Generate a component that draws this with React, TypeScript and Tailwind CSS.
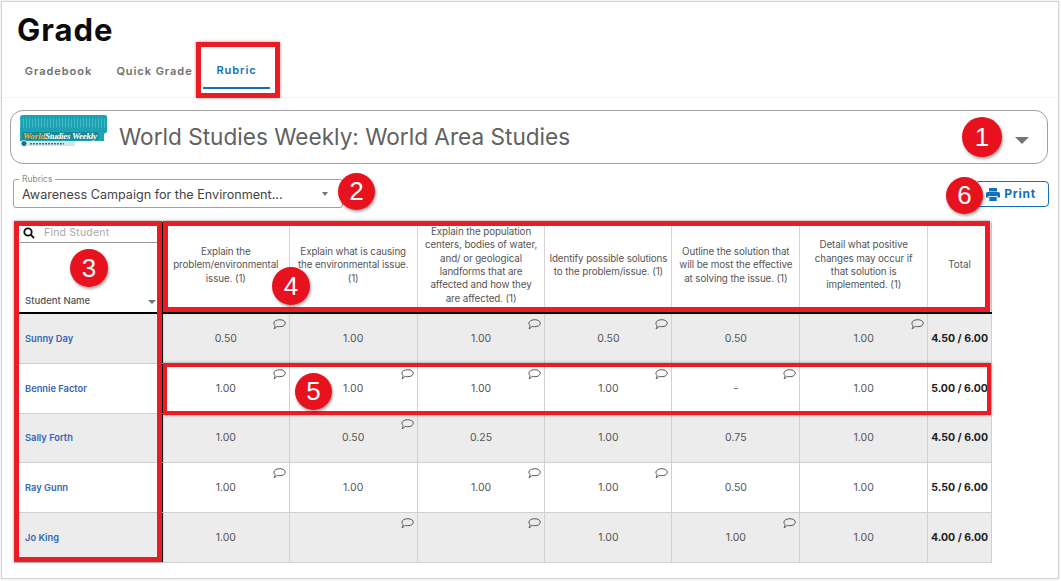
import React from "react";

const cols = ["w-[127px]", "w-[128px]", "w-[128px]", "w-[127px]", "w-[128px]", "w-[128px]"];
const headers = [
  ["Explain the", "problem/environmental", "issue. (1)"],
  ["Explain what is causing", "the environmental issue.", "(1)"],
  ["Explain the population", "centers, bodies of water,", "and/ or geological", "landforms that are", "affected and how they", "are affected. (1)"],
  ["Identify possible solutions", "to the problem/issue. (1)"],
  ["Outline the solution that", "will be most the effective", "at solving the issue. (1)"],
  ["Detail what positive", "changes may occur if", "that solution is", "implemented. (1)"],
];
type Row = { name: string; h: string; vals: string[]; c: number[]; total: string; shade: boolean };
const rows: Row[] = [
  { name: "Sunny Day", h: "h-[50px]", vals: ["0.50", "1.00", "1.00", "0.50", "0.50", "1.00"], c: [0, 2, 3, 5], total: "4.50 / 6.00", shade: true },
  { name: "Bennie Factor", h: "h-[50px]", vals: ["1.00", "1.00", "1.00", "1.00", "-", "1.00"], c: [0, 1, 2, 3, 4], total: "5.00 / 6.00", shade: false },
  { name: "Sally Forth", h: "h-[49px]", vals: ["1.00", "0.50", "0.25", "1.00", "0.75", "1.00"], c: [1], total: "4.50 / 6.00", shade: true },
  { name: "Ray Gunn", h: "h-[50px]", vals: ["1.00", "1.00", "1.00", "1.00", "0.50", "1.00"], c: [0, 2, 3], total: "5.50 / 6.00", shade: false },
  { name: "Jo King", h: "h-[50px]", vals: ["1.00", "", "", "1.00", "1.00", "1.00"], c: [1, 2, 4], total: "4.00 / 6.00", shade: true },
];

function Bubble() {
  return (
    <svg className="absolute right-[3px] top-[5px]" width="13" height="11" viewBox="0 0 13 11" fill="none" stroke="#555" strokeWidth="1">
      <path d="M6.8 0.7C9.9 0.7 12.3 2.2 12.3 4.2C12.3 6.2 9.9 7.7 6.8 7.7C5.8 7.7 4.9 7.6 4.1 7.3C3.4 8.4 2.2 9.6 1 9.6C1.7 8.8 2.1 7.6 2 6.5C1.3 5.9 0.9 5.1 0.9 4.2C0.9 2.2 3.6 0.7 6.8 0.7Z" />
    </svg>
  );
}

function Badge({ n, className }: { n: number; className: string }) {
  return (
    <div className={"absolute z-20 flex items-center justify-center rounded-full bg-[#e8121f] text-[26px] text-white shadow-[1px_2px_3px_rgba(0,0,0,0.35)] " + className} style={{ fontFamily: "'Liberation Sans', sans-serif" }}>
      {n}
    </div>
  );
}

function Caret({ className }: { className: string }) {
  return <div className={"h-0 w-0 border-x-transparent border-t-[#757575] " + className} />;
}

function Logo() {
  return (
    <svg width="88" height="33" viewBox="0 0 88 33" className="shrink-0">
      <path d="M3 0H85Q87 0 87 3V17L84 19V26H0V3Q0 0 3 0Z" fill="#1ba3b3" />
      <path d="M0 8H87" stroke="#6fc8d2" strokeWidth="9" strokeDasharray="1 2" opacity="0.55" />
      <rect x="2" y="17" width="76" height="8" fill="#16616c" opacity="0.4" />
      <text x="3" y="24" fontSize="9" fontWeight="700" fill="#f5b21f" fontFamily="'Liberation Serif', serif" fontStyle="italic">World</text>
      <text x="25" y="24" fontSize="9" fontWeight="700" fill="#ffffff" fontFamily="'Liberation Serif', serif" fontStyle="italic" textLength="52">Studies Weekly</text>
      <rect x="1" y="26" width="54" height="5" fill="#c8e8ec" />
      <circle cx="4" cy="28.5" r="3" fill="#1c6f93" stroke="#fff" strokeWidth="0.8" />
      <path d="M10 28.7H44" stroke="#334" strokeWidth="1.4" strokeDasharray="2 1" opacity="0.7" />
    </svg>
  );
}

export default function App() {
  return (
    <div className="h-[581px] w-[1061px] overflow-hidden bg-white p-px" style={{ fontFamily: "Inter, 'Noto Sans', sans-serif" }}>
      <div className="relative h-[578px] w-[1058px] border border-[#d4d4d4] shadow-[0_0_2px_rgba(0,0,0,0.15)]">
        <div className="pl-[15px] pt-[10px] text-[31px] font-bold leading-[36px] tracking-[1px] text-[#0c0c0c]">Grade</div>

        <div className="flex h-[50px] items-start border-b border-[#f4f4f4] pl-[11px] text-[11px] font-semibold tracking-[0.95px] text-[#6f6f6f]">
          <div className="flex h-[41px] w-[91px] items-center justify-center pt-[6px]">Gradebook</div>
          <div className="ml-[1px] flex h-[41px] w-[99px] items-center justify-center pt-[6px]">Quick Grade</div>
          <div className="-ml-[1px] flex h-[41px] w-[67px] items-center justify-center border-b-2 border-[#1270bd] pt-[6px] text-[#1270bd]">Rubric</div>
        </div>

        <div className="mx-[8px] mt-[12px] flex h-[54px] w-[1038px] items-start rounded-[13px] border border-[#a0a0a0] pl-[9px] pt-[4px]">
          <Logo />
          <div className="ml-[11px] mt-[5px] text-[22.6px] leading-[34px] text-[#616161]">World Studies Weekly: World Area Studies</div>
          <Caret className="ml-auto mr-[18px] mt-[22px] border-x-[7px] border-t-[7px]" />
        </div>

        <div className="mt-[15px] flex items-start pl-[11px] pr-[9px]">
          <div className="relative flex h-[29px] w-[330px] items-center rounded-[3px] border border-[#a0a0a0] pl-[8px] pt-[3px] text-[12.6px] text-[#444]">
            <span className="absolute -top-[6px] left-[5px] bg-white px-[3px] text-[8.5px] leading-[10px] text-[#8a8a8a]">Rubrics</span>
            Awareness Campaign for the Environment...
            <Caret className="absolute right-[14px] top-[12px] border-x-[3.5px] border-t-[4px]" />
          </div>
          <div className="ml-auto mt-[2px] flex h-[26px] w-[74px] items-center justify-end gap-[4px] rounded-[4px] border border-[#1270bd] pr-[12px] text-[12px] font-bold tracking-[0.8px] text-[#1270bd]">
            <svg width="14" height="13" viewBox="0 0 14 13" fill="#1270bd">
              <path d="M3 0H11V3.5H3Z" />
              <path d="M1.5 4H12.5Q14 4 14 5.5V9.5H11.5V8H2.5V9.5H0V5.5Q0 4 1.5 4Z" />
              <path d="M3.3 8.8H10.7V13H3.3Z" />
            </svg>
            Print
          </div>
        </div>

        <div className="ml-[12px] mt-[14px] w-[978px] text-[#555]">
          <div className="flex h-[92px] border-b-2 border-black">
            <div className="flex w-[149px] flex-col border-r-2 border-black pl-[6px] pr-[4px]">
              <div className="flex h-[21px] items-center gap-[9px] border-b border-[#999] pl-[3px] pt-[1px]">
                <svg width="12" height="12" viewBox="0 0 12 12" fill="none" stroke="#111" strokeWidth="1.8"><circle cx="5" cy="5" r="3.7" /><path d="M7.7 7.7L11 11" /></svg>
                <span className="text-[10.5px] font-normal tracking-[0.2px] text-[#a8a8a8]">Find Student</span>
              </div>
              <div className="mt-auto flex items-center justify-between pb-[4px] pl-[5px] pr-[1px] text-[9.6px] font-medium text-[#555]">
                Student Name
                <Caret className="mt-[3px] border-x-[4px] border-t-[4px]" />
              </div>
            </div>
            {headers.map((lines, i) => (
              <div key={i} className={"flex flex-col items-center justify-center border-r border-[#d4d4d4] pb-[4px] text-center text-[9.8px] font-normal leading-[13.4px] tracking-[-0.1px] text-[#555] " + cols[i]}>
                {lines.map((l) => (
                  <div key={l} className="whitespace-nowrap">{l}</div>
                ))}
              </div>
            ))}
            <div className="flex w-[64px] items-center justify-center border-r border-[#d4d4d4] pb-[4px] text-[9.8px] text-[#555]">Total</div>
          </div>

          {rows.map((r) => (
            <div key={r.name} className={"flex border-b border-[#d0d0d0] " + r.h + " " + (r.shade ? "bg-[#ececec]" : "bg-white")}>
              <div className="flex w-[149px] items-center border-r-2 border-black pl-[11px] text-[9.3px] font-semibold text-[#3565b5]">{r.name}</div>
              {r.vals.map((v, i) => (
                <div key={i} className={"relative flex items-center justify-center border-r border-[#d0d0d0] text-[10.5px] text-[#555] " + cols[i]}>
                  {v}
                  {r.c.includes(i) && <Bubble />}
                </div>
              ))}
              <div className="flex w-[64px] items-center justify-center border-r border-[#d0d0d0] text-[10.5px] font-bold text-[#222]">{r.total}</div>
            </div>
          ))}
        </div>

        {/* annotation overlays */}
        <div className="absolute left-[194px] top-[40px] z-10 h-[56px] w-[84px] border-[5px] border-[#ed1c24] shadow-[0_0_3px_rgba(0,0,0,0.4)]" />
        <div className="absolute left-[12px] top-[219px] z-10 h-[341px] w-[148px] border-[5px] border-[#ed1c24] shadow-[0_0_3px_rgba(0,0,0,0.4)]" />
        <div className="absolute left-[161px] top-[219px] z-10 h-[91px] w-[827px] border-[5px] border-[#ed1c24] shadow-[0_0_3px_rgba(0,0,0,0.4)]" />
        <div className="absolute left-[161px] top-[361px] z-10 h-[52px] w-[828px] border-[4px] border-[#ed1c24] shadow-[0_0_3px_rgba(0,0,0,0.4)]" />

        <Badge n={1} className="left-[960px] top-[115px] h-[40px] w-[40px] bg-[#e60a0a]" />
        <Badge n={2} className="left-[336px] top-[171px] h-[37px] w-[37px]" />
        <Badge n={6} className="left-[944px] top-[175px] h-[37px] w-[37px]" />
        <Badge n={3} className="left-[68px] top-[247px] h-[38px] w-[38px]" />
        <Badge n={4} className="left-[270px] top-[265px] h-[38px] w-[38px]" />
        <Badge n={5} className="left-[293px] top-[371px] h-[37px] w-[37px]" />
      </div>
    </div>
  );
}
